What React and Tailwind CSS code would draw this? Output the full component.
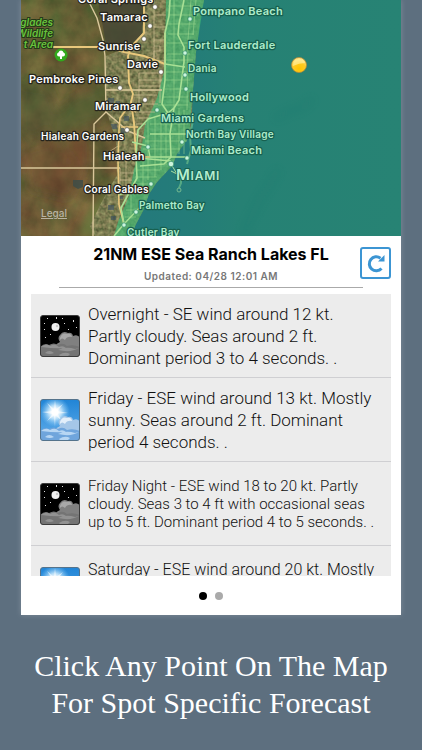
import React, { useId } from "react";

const landLabels = [
  { text: "Coral Springs", x: 78, y: 3 },
  { text: "Tamarac", x: 100, y: 21 },
  { text: "Sunrise", x: 98, y: 50 },
  { text: "Davie", x: 127, y: 68 },
  { text: "Pembroke Pines", x: 29, y: 83 },
  { text: "Miramar", x: 95, y: 110 },
  { text: "Hialeah Gardens", x: 41, y: 140, small: true },
  { text: "Hialeah", x: 103, y: 160 },
  { text: "Coral Gables", x: 84, y: 193, small: true },
];

const coastLabels = [
  { text: "Pompano Beach", x: 193, y: 15 },
  { text: "Fort Lauderdale", x: 188, y: 49 },
  { text: "Dania", x: 188, y: 72, small: true },
  { text: "Hollywood", x: 190, y: 101 },
  { text: "Miami Gardens", x: 161, y: 122 },
  { text: "North Bay Village", x: 186, y: 138, small: true },
  { text: "Miami Beach", x: 191, y: 154 },
  { text: "Palmetto Bay", x: 139, y: 209, small: true },
  { text: "Cutler Bay", x: 127, y: 236, small: true },
];

const townDots = [
  [155, 7], [150, 26], [144, 39], [161, 72], [120, 88], [145, 100], [127, 130],
];
const coastDots = [
  [190, 19], [185, 53], [185, 75], [186, 89], [157, 110], [182, 142],
  [187, 158], [148, 147], [151, 184], [136, 212], [124, 225],
];

function MapLabel({ text, x, y, small, coast }) {
  return (
    <text
      x={x}
      y={y}
      fontSize={small ? 10 : 11}
      fontWeight="600"
      className="tracking-wide"
      fill={coast ? "#aeeccb" : "#ffffff"}
      stroke={coast ? "#17604f" : "#26251d"}
      strokeWidth="2.4"
      strokeLinejoin="round"
      paintOrder="stroke"
    >
      {text}
    </text>
  );
}

function CoastMap() {
  return (
    <svg
      viewBox="21 0 380 236"
      preserveAspectRatio="xMidYMid slice"
      role="img"
      aria-label="Satellite map of the coast from Coral Springs to Cutler Bay"
      className="block w-full font-[Inter,sans-serif]"
    >
      <defs>
        <linearGradient id="land" x1="0" y1="0" x2="0" y2="1">
          <stop offset="0" stopColor="#606136" />
          <stop offset="0.35" stopColor="#665f37" />
          <stop offset="0.55" stopColor="#665736" />
          <stop offset="1" stopColor="#725b39" />
        </linearGradient>
        <linearGradient id="sea" x1="0" y1="0" x2="1" y2="0">
          <stop offset="0" stopColor="#24797c" />
          <stop offset="0.25" stopColor="#247d78" />
          <stop offset="0.4" stopColor="#268174" />
          <stop offset="1" stopColor="#278374" />
        </linearGradient>
        <radialGradient id="pin" cx="0.5" cy="0.75" r="0.7">
          <stop offset="0" stopColor="#ffc400" />
          <stop offset="0.6" stopColor="#ffcb24" />
          <stop offset="1" stopColor="#ffe58a" />
        </radialGradient>
        <filter id="terrain" x="0" y="0" width="1" height="1" colorInterpolationFilters="sRGB">
          <feTurbulence type="fractalNoise" baseFrequency="0.045 0.04" numOctaves="5" seed="8" />
          <feColorMatrix values="0.9 0.1 0 0 -0.1  0.35 0.55 0 0 -0.07  0.3 0.2 0 0 -0.06  0 0 0 0 1" />
        </filter>
        <filter id="city" x="0" y="0" width="1" height="1" colorInterpolationFilters="sRGB">
          <feTurbulence type="fractalNoise" baseFrequency="0.25" numOctaves="3" seed="3" />
          <feColorMatrix values="1.5 0.1 0 0 -0.3  1.2 0.4 0 0 -0.3  1 0.2 0 0 -0.26  0 0 0 0 1" />
        </filter>
        <filter id="soft" x="-0.3" y="-0.3" width="1.6" height="1.6">
          <feGaussianBlur stdDeviation="5" />
        </filter>
        <clipPath id="metro">
          <path d="M145 0H205V236H95L90 226 100 205 117 175 116 140 106 110 106 56 130 46 142 34Z" />
        </clipPath>
      </defs>

      <rect x="21" width="380" height="236" fill="url(#land)" />
      <rect x="21" width="190" height="236" filter="url(#terrain)" opacity="0.3" />
      <g filter="url(#soft)">
        <path d="M70 100L100 85 104 120 80 125 60 150 50 130Z" fill="#525f33" opacity="0.6" />
        <path d="M21 85L50 90 60 120 30 140 21 130Z" fill="#4f5a31" opacity="0.45" />
        <path d="M24 150L60 140 85 170 70 200 30 190Z" fill="#7b4b2c" opacity="0.4" />
        <path d="M70 130L90 130 90 165 65 165Z" fill="#733d29" opacity="0.4" />
        <path d="M92 205L115 178 118 236H75Z" fill="#6c7c3e" opacity="0.8" />
      </g>
      <path d="M98 0H145L142 34 130 46 106 44Z" fill="#454537" opacity="0.75" />
      <path d="M73 180L83 180 83 187 78 189 73 186Z" fill="#3c4c48" opacity="0.8" />
      <g clipPath="url(#metro)">
        <rect x="80" width="130" height="236" fill="#7b7c50" />
        <rect x="80" width="130" height="236" filter="url(#city)" opacity="0.32" />
        <g fill="#3c5062" opacity="0.6">
          <path d="M108 98h6v5h-6zM116 101h4v7h-4zM109 124h8v5h-8zM121 126h6v7h-6zM111 137h7v3h-7zM124 116h5v5h-5zM108 205h6v5h-6zM111 216h5v4h-5zM118 196h5v3h-5z" />
        </g>
      </g>

      <path d="M204 0C199 20 199 34 196 52L193 90C192 110 192 125 189 137L177 154 172 166 157 182 149 194 143 211 136 224 131 236H401V0Z" fill="url(#sea)" />
      <path d="M166 0L165 55 164 72 157 98 145 125 142 145 134 169 129 196 118 222 114 236H131L136 224 143 211 149 194 157 182 172 166 177 154 189 137 193 90 196 52 204 0Z" fill="#3fbd78" fillOpacity="0.66" />
      <path d="M278 170L270 184 260 199 254 211 248 222 243 236M275 119L290 111 302 108 313 99" stroke="#176d65" strokeWidth="3" fill="none" opacity="0.25" filter="url(#soft)" />

      <g fill="none" stroke="#d9c79b" strokeLinejoin="round">
        <path strokeWidth="1.4" d="M88 0L97 18 103 40 105 56 106 112 94 124 93 236M21 168H120M106 112L128 131 145 138M106 90L162 90" />
        <path strokeWidth="0.8" opacity="0.8" d="M154 15H166M154 27H167M154 40H166M154 46H160V51H154V61H165M154 0V70M160 70V103M139 73V104M139 73H160M139 80H162M139 86H160M134 95H157M140 104H158M139 112H155M139 118H150M136 124H146M120 168V185M120 173H134M120 180H132M110 157H143M126 155V198M109 152L118 146" />
      </g>
      <g fill="none" stroke="#e9c87c" strokeLinejoin="round">
        <path strokeWidth="1.9" d="M53 47H107L124 52 144 56 165 64M144 0V33L131 47 128 56 129 83 133 94 131 102 134 123 136 156" />
        <path strokeWidth="1.6" d="M119 157H150M128 107L120 118 119 130 118 160 119 205M119 205L124 224M121 127H138M128 107L136 112M165 33L165 64" />
      </g>
      <g fill="none" stroke="#a9e095" strokeLinejoin="round">
        <path strokeWidth="1.6" d="M184 0L179 24 178 35 184 47 184 62 179 100 174 108 168 113 162 104 165 80 165 33 169 16 170 0M174 108L170 134 171 157 164 164 140 166M168 113L148 119 138 130 136 155 137 178 121 208 124 224 114 236" />
        <path strokeWidth="1.3" d="M138 158L171 161M132 142L148 146 150 157M165 64L185 67M150 157H190M119 195L135 190M124 224L143 204M150 134H187" />
        <path strokeWidth="0.7" opacity="0.7" d="M174 0V108M191 0L188 40 187 110M196 0L193 35M168 6H200M168 15H198M168 24H196M168 34H194M167 43H193M167 54H190M166 60H193M166 72H190M165 80H190M165 89H188M163 97H188M158 105H188M150 124H188M145 141H187M143 149H180M148 119V180M155 118V177M161 114V170M166 114V165M179 108V154M184 110V154M137 170H160M135 177H157M133 184H150M143 160V193M131 189V216M126 210H137M125 217H136" />
      </g>
      <path d="M194 115L190 136 191 150 187 164M181 172V183L179 188" stroke="#55a984" strokeWidth="2" fill="none" />
      <circle cx="179" cy="190" r="2" fill="none" stroke="#75ba91" />
      <path d="M171 164L177 174 171 171" stroke="#a8dfa4" fill="none" />

      <g fill="#ffffff" stroke="#55513c" strokeWidth="0.7">
        {townDots.map(([x, y]) => <circle key={`${x}-${y}`} cx={x} cy={y} r="2.4" />)}
      </g>
      <g fill="#cdf5dd" stroke="#2c8a66" strokeWidth="0.7">
        {coastDots.map(([x, y]) => <circle key={`${x}-${y}`} cx={x} cy={y} r="2.2" />)}
        <circle cx="171" cy="164" r="2.8" />
      </g>

      <g fontSize="10" fontWeight="600" fontStyle="italic" textAnchor="end" fill="#69c33d" stroke="#253918" strokeWidth="2" paintOrder="stroke">
        <text x="53" y="26">glades</text>
        <text x="53" y="37">Wildlife</text>
        <text x="53" y="48">t Area</text>
      </g>
      <circle cx="61" cy="55" r="6.5" fill="#32a91d" />
      <path d="M60 59V56.500Q57 57 57 54.500Q57 53 58.500 52.500Q59 50.500 61 50.500Q63 50.500 63.500 52.500Q65 53 65 54.500Q65 57 62 56.500V59Z" fill="#fff" />

      {landLabels.map((label) => <MapLabel key={label.text} {...label} />)}
      {coastLabels.map((label) => <MapLabel key={label.text} {...label} coast />)}
      <text x="176" y="180" fontSize="15" fontWeight="600" className="tracking-wider" fill="#b4edcf" stroke="#17604f" strokeWidth="2" paintOrder="stroke">
        M<tspan fontSize="12">IAMI</tspan>
      </text>
      <a href="#legal">
        <text x="41" y="217" fontSize="10" fontWeight="500" textDecoration="underline" fill="#b9b3a2">Legal</text>
      </a>
      <circle cx="299" cy="65" r="7.500" fill="url(#pin)" stroke="#b58c35" strokeWidth="0.8" />
      <path d="M293 66Q293 59 299 59Q304 59 305 63Q299 63 293 66Z" fill="#fff2a8" opacity="0.65" />
    </svg>
  );
}

function WeatherIcon({ night }) {
  const id = useId();
  const clouds = night
    ? { back: "#808080", light: "#a9a9a9", front: "#747474", low: "#929292" }
    : { back: "#a5c7e8", light: "#e3effa", front: "#6fa5dc", low: "#b7d6f3" };
  return (
    <svg viewBox="0 0 40 42" className="h-[42px] w-10 shrink-0" role="img" aria-label={night ? "Partly cloudy night" : "Mostly sunny"}>
      <defs>
        <linearGradient id={`${id}s`} x1="0" y1="0" x2="0" y2="1">
          <stop offset="0" stopColor={night ? "#000" : "#2084d6"} />
          <stop offset="1" stopColor={night ? "#000" : "#62aeea"} />
        </linearGradient>
        <radialGradient id={`${id}g`}>
          <stop offset="0.2" stopColor="#fff" />
          <stop offset="0.45" stopColor="#d8f1ff" stopOpacity="0.8" />
          <stop offset="1" stopColor="#80c9fa" stopOpacity="0" />
        </radialGradient>
        <clipPath id={`${id}c`}><rect x="0.5" y="0.5" width="39" height="41" rx="2.5" /></clipPath>
      </defs>
      <g clipPath={`url(#${id}c)`}>
        <rect width="40" height="42" fill={`url(#${id}s)`} />
        {night ? (
          <>
            <circle cx="15.500" cy="12" r="4" fill="#f1f1f1" />
            <circle cx="17" cy="11" r="1.200" fill="#c8c8c8" />
            <path d="M4 8h1v1H4zM7 3h1v1H7zM16 2h1v2h-1zM24 8h1v1h-1zM33 5h1v2h-1zM28 14h1v1h-1zM4 14h1v1H4zM5 22h1v1H5zM22 3h1v1h-1zM36 12h1v1h-1zM10 19h1v1h-1z" fill="#ddd" />
          </>
        ) : (
          <>
            <circle cx="15" cy="13" r="15" fill={`url(#${id}g)`} />
            <path d="M15 1L16 10 23 5 17.500 12 28 14 17.500 14.500 22 22 15.500 16.500 15 28 14 16.500 7 22 12.500 15 2 13 12.500 12 7 4 14 10Z" fill="#fff" opacity="0.6" />
          </>
        )}
        <path d="M14 32Q17 28 20 27Q17 23 20 20Q23 15 28 18Q32 17 33 21Q38 19 40 23V42H14Z" fill={clouds.back} />
        <path d="M20 23Q22 17 27 19Q31 18 32 22Q27 21 25 25Q22 22 20 25Z" fill={clouds.light} />
        <path d="M0 32Q5 27 9 30Q14 27 18 30Q23 27 27 31Q33 29 40 32V42H0Z" fill={clouds.front} />
        <path d="M1 32Q6 28 10 31Q15 28 19 32Q23 30 26 33Q16 34 1 32ZM18 35Q26 31 35 34L39 33Q31 38 18 35ZM5 38Q9 34 14 38Q10 40 5 38ZM19 40Q25 36 30 39L28 41H20Z" fill={clouds.low} />
      </g>
      <rect x="0.5" y="0.5" width="39" height="41" rx="2.5" fill="none" stroke={night ? "#3b3b3b" : "#55738b"} />
    </svg>
  );
}

const forecast = [
  { text: "Overnight - SE wind around 12 kt. Partly cloudy. Seas around 2 ft. Dominant period 3 to 4 seconds. .", night: true, size: "text-[17px] leading-[22px]" },
  { text: "Friday - ESE wind around 13 kt. Mostly sunny. Seas around 2 ft. Dominant period 4 seconds. .", size: "text-[17px] leading-[22px]" },
  { text: "Friday Night - ESE wind 18 to 20 kt. Partly cloudy. Seas 3 to 4 ft with occasional seas up to 5 ft. Dominant period 4 to 5 seconds. .", night: true, size: "text-[15px] leading-[18px]" },
  { text: "Saturday - ESE wind around 20 kt. Mostly", size: "h-[54px] text-[16px] leading-[18px]" },
];

export default function App() {
  return (
    <div className="flex min-h-screen flex-col bg-[#5d6f7f] font-[Inter,sans-serif]">
      <main className="mx-[21px] bg-white shadow-[0_0_6px_rgba(255,255,255,0.2)]">
        <CoastMap />
        <header className="relative px-[38px] pt-[7px] text-center">
          <h1 className="text-[16px] leading-[22px] font-bold whitespace-nowrap text-black">21NM ESE Sea Ranch Lakes FL</h1>
          <p className="mt-1 text-[10px] leading-[14px] font-semibold tracking-wider text-[#777]">Updated: 04/28 12:01 AM</p>
          <hr className="mt-1 border-[#aaa]" />
          <button
            type="button"
            aria-label="Refresh forecast"
            className="absolute top-[11px] right-[10px] flex h-8 w-[31px] items-center justify-center rounded-[3px] border-2 border-[#3c95d3] text-[#3c95d3]"
          >
            <svg viewBox="0 0 20 20" className="size-5" fill="none" stroke="currentColor" aria-hidden="true">
              <path d="M15.500 15.500A7 7 0 1 1 14.500 5.200" strokeWidth="3" />
              <path d="M18.500 2V8.500H12Z" fill="currentColor" stroke="none" />
            </svg>
          </button>
        </header>
        <ul className="mx-[10px] mt-[6px] h-[282px] overflow-hidden bg-[#ececec] font-[Roboto,sans-serif]">
          {forecast.map((row) => (
            <li key={row.text} className="flex h-[84px] items-center gap-2 border-b border-[#cfcfd2] pr-3 pl-[9px]">
              <WeatherIcon night={row.night} />
              <p className={`flex-1 font-light text-[#111] ${row.size}`}>{row.text}</p>
            </li>
          ))}
        </ul>
        <nav aria-label="Pages" className="flex justify-center gap-2 pt-4 pb-[15px]">
          <button type="button" aria-label="Page 1" aria-current="page" className="size-2 rounded-full bg-black" />
          <button type="button" aria-label="Page 2" className="size-2 rounded-full bg-[#aaa]" />
        </nav>
      </main>
      <p className="mt-8 text-center font-['Liberation_Serif',serif] text-[30px] leading-[37px] text-white">
        Click Any Point On The Map
        <br />
        For Spot Specific Forecast
      </p>
    </div>
  );
}
